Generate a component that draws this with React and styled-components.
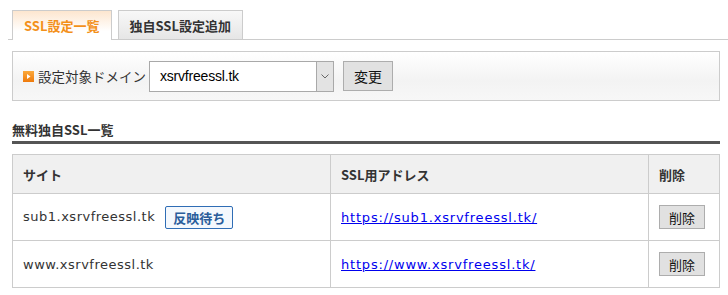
import React from "react";
import styled, { createGlobalStyle } from "styled-components";

const GlobalStyle = createGlobalStyle`
  body {
    margin: 0;
    background: #fff;
    color: #333;
    font-family: "Noto Sans CJK JP", "DejaVu Sans", sans-serif;
  }
`;

const Page = styled.div`
  width: 728px;
`;

const TabBar = styled.div`
  display: flex;
  gap: 6px;
  margin-left: 8px;
  padding: 10px 0 0 4px;
  border-bottom: 1px solid #ccc;
  height: 29px;
`;

const Tab = styled.div`
  display: flex;
  align-items: center;
  padding: 0 11px;
  height: ${p => (p.$active ? "30px" : "29px")};
  box-sizing: border-box;
  border: 1px solid #ccc;
  border-bottom: none;
  font-size: 13px;
  font-weight: 700;
  color: ${p => (p.$active ? "#f39019" : "#333")};
  background: ${p =>
    p.$active
      ? "linear-gradient(#fde6cf, #fff 70%)"
      : "linear-gradient(#f8f8f8, #e6e6e6)"};
`;

const Content = styled.div`
  padding: 11px 8px 0 12px;
`;

const DomainBox = styled.div`
  display: flex;
  align-items: center;
  height: 50px;
  box-sizing: border-box;
  padding-left: 10px;
  border: 1px solid #ccc;
  background: linear-gradient(#fff 0%, #f3f3f3 60%, #f7f7f7 100%);
`;

const Label = styled.span`
  display: flex;
  align-items: center;
  gap: 4px;
  font-size: 13.5px;
  color: #333;
`;

const Select = styled.div`
  display: flex;
  margin-left: 3px;
  width: 185px;
  height: 31px;
  box-sizing: border-box;
  border: 1px solid #a9a9a9;
  background: #fff;
`;

const SelectValue = styled.div`
  flex: 1;
  display: flex;
  align-items: center;
  padding-left: 10px;
  font-family: "Liberation Sans", Arial, sans-serif;
  font-size: 14px;
  letter-spacing: -0.2px;
  color: #000;
`;

const SelectArrow = styled.div`
  width: 16px;
  display: flex;
  align-items: center;
  justify-content: center;
  border-left: 1px solid #a9a9a9;
  background: #e3e3e3;
`;

const GrayButton = styled.button`
  box-sizing: border-box;
  height: ${p => p.$h || "30px"};
  padding: 0 ${p => p.$px || "10px"};
  margin-left: ${p => p.$ml || "0"};
  border: 1px solid #adadad;
  background: #e1e1e1;
  color: #111;
  font-family: "Noto Sans CJK JP", sans-serif;
  font-size: ${p => p.$fs || "13px"};
  border-radius: 0;
`;

const SectionTitle = styled.h2`
  margin: 19px 0 10px;
  padding-bottom: 2px;
  line-height: 19px;
  border-bottom: 3px solid #555;
  font-size: 13px;
  font-weight: 700;
  color: #333;
`;

const Table = styled.table`
  width: 708px;
  border-collapse: collapse;
  table-layout: fixed;
`;

const Row = styled.tr`
  height: ${p => (p.$head ? "39px" : "47px")};
`;

const Th = styled.th`
  box-sizing: border-box;
  width: ${p => p.$w || "auto"};
  text-align: left;
  padding: 0 10px;
  border: 1px solid #ccc;
  background: #f0f0f0;
  font-size: 13px;
  font-weight: 700;
  color: #333;
  white-space: nowrap;
`;

const Td = styled.td`
  box-sizing: border-box;
  padding: 0 10px;
  border: 1px solid #ccc;
  font-family: "DejaVu Sans", "Noto Sans CJK JP", sans-serif;
  font-size: 13px;
  letter-spacing: 0.5px;
  color: #333;
  white-space: nowrap;
`;

const Badge = styled.span`
  display: inline-block;
  margin-left: 10px;
  padding: 0 7px;
  height: 23px;
  line-height: 21px;
  box-sizing: border-box;
  border: 1px solid #2f6db5;
  border-radius: 2px;
  background: #f4f8fd;
  color: #2a5d9b;
  font-family: "Noto Sans CJK JP", sans-serif;
  font-size: 13px;
  font-weight: 600;
  letter-spacing: 0;
  vertical-align: middle;
`;

const Link = styled.a`
  color: #0000ee;
  letter-spacing: 0.8px;
  text-decoration: underline;
`;

const Marker = () => (
  <svg width="11" height="11" viewBox="0 0 11 11">
    <defs>
      <linearGradient id="mk" x1="0" y1="0" x2="0" y2="1">
        <stop offset="0" stopColor="#fba93c" />
        <stop offset="1" stopColor="#ee7a0c" />
      </linearGradient>
    </defs>
    <rect width="11" height="11" fill="url(#mk)" />
    <path d="M4 3 L7.5 5.5 L4 8 Z" fill="#fff" />
  </svg>
);

const rows = [
  { site: "sub1.xsrvfreessl.tk", url: "https://sub1.xsrvfreessl.tk/", pending: true },
  { site: "www.xsrvfreessl.tk", url: "https://www.xsrvfreessl.tk/" },
];

const App = () => (
  <Page>
    <GlobalStyle />
    <TabBar>
      <Tab $active>SSL設定一覧</Tab>
      <Tab>独自SSL設定追加</Tab>
    </TabBar>
    <Content>
      <DomainBox>
        <Label>
          <Marker />
          設定対象ドメイン
        </Label>
        <Select>
          <SelectValue>xsrvfreessl.tk</SelectValue>
          <SelectArrow>
            <svg width="8" height="5" viewBox="0 0 8 5">
              <path d="M0.5 0.5 L4 4 L7.5 0.5" fill="none" stroke="#666" strokeWidth="1" />
            </svg>
          </SelectArrow>
        </Select>
        <GrayButton $ml="9px" $px="10px" $fs="14px">変更</GrayButton>
      </DomainBox>

      <SectionTitle>無料独自SSL一覧</SectionTitle>

      <Table>
        <thead>
          <Row $head>
            <Th $w="318px">サイト</Th>
            <Th $w="318px">SSL用アドレス</Th>
            <Th>削除</Th>
          </Row>
        </thead>
        <tbody>
          {rows.map(r => (
            <Row key={r.site}>
              <Td>
                {r.site}
                {r.pending && <Badge>反映待ち</Badge>}
              </Td>
              <Td>
                <Link href="#">{r.url}</Link>
              </Td>
              <Td>
                <GrayButton $h="24px" $px="9px">削除</GrayButton>
              </Td>
            </Row>
          ))}
        </tbody>
      </Table>
    </Content>
  </Page>
);

export default App;
